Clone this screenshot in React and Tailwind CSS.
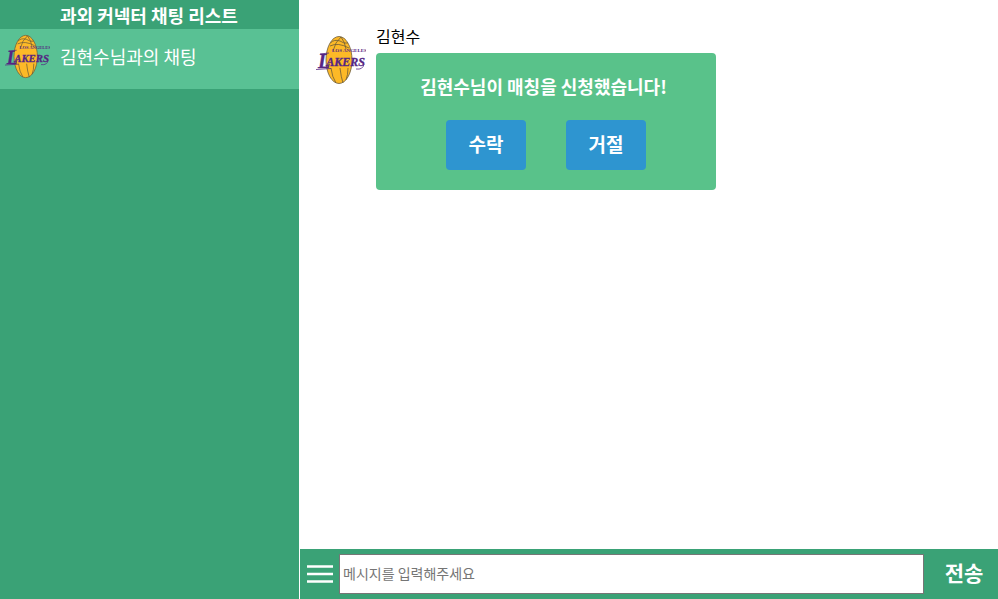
function LakersLogo({ className }) {
  return (
    <svg viewBox="0 0 50 50" className={className} role="img" aria-label="Los Angeles Lakers">
      <ellipse cx="23" cy="25" rx="13" ry="23.500" fill="#fdb927" stroke="#6b5a38" strokeWidth="0.8" />
      <g fill="none" stroke="#6b5a38" strokeWidth="0.8">
        <path d="M14.500 8Q18 4 24 6Q28 9 32 8" />
        <path d="M25 2Q19 7 17 16M25 2Q29 7 30 14M14 11Q22 7 33 13" />
        <path d="M15 33Q16 42 20 48M24 33Q25 42 27 48M32 33Q32 40 30 45" />
      </g>
      <g fill="#552583" fontFamily="Liberation Serif, serif" fontWeight="bold">
        <text x="16" y="17" fontSize="5">LOS ANGELES</text>
        <text x="2" y="33" fontStyle="italic" stroke="#552583" strokeWidth="0.3">
          <tspan fontSize="20">L</tspan>
          <tspan fontSize="12" dx="-4" dy="-2">AKERS</tspan>
        </text>
      </g>
      <path d="M0 34.500L15 33.500M4 19L13 18M48 29Q47 35 40 34" stroke="#552583" strokeWidth="0.8" fill="none" />
    </svg>
  );
}

function ChatList() {
  return (
    <aside className="w-[299px] shrink-0 bg-[#3aa276] text-lg text-white">
      <h1 className="h-[29px] pt-px pl-[60px] font-bold">과외 커넥터 채팅 리스트</h1>
      <a href="#chat" className="flex h-[60px] items-start bg-[#59c194] pt-[5px] pl-[5px]">
        <LakersLogo className="mr-[10px] size-[45px] shrink-0" />
        <span className="pt-2">김현수님과의 채팅</span>
      </a>
    </aside>
  );
}

function MatchRequest() {
  return (
    <article className="flex gap-[10px] pt-6 pl-4">
      <LakersLogo className="mt-[11px] size-[50px] shrink-0" />
      <div>
        <p className="h-[29px] text-base">김현수</p>
        <div className="w-[340px] rounded bg-[#59c28a] p-5 text-white">
          <p className="mb-5 pr-[5px] text-center text-lg leading-[27px] font-bold">김현수님이 매칭을 신청했습니다!</p>
          <div className="flex justify-center gap-10">
            <button type="button" className="h-[50px] w-20 rounded bg-[#2e95d0] pb-[2px] text-[19px] font-bold">수락</button>
            <button type="button" className="h-[50px] w-20 rounded bg-[#2e95d0] pb-[2px] text-[19px] font-bold">거절</button>
          </div>
        </div>
      </div>
    </article>
  );
}

function Composer() {
  return (
    <form className="flex h-[50px] items-center bg-[#3aa276]">
      <button type="button" aria-label="메뉴" className="flex h-full w-[39px] items-center justify-center">
        <svg viewBox="0 0 26 20" className="h-5 w-[26px]" aria-hidden="true">
          <path d="M0 2.500H26M0 10H26M0 17.500H26" stroke="#fff" strokeWidth="2.500" />
        </svg>
      </button>
      <input
        type="text"
        aria-label="메시지"
        placeholder="메시지를 입력해주세요"
        className="h-10 min-w-0 flex-1 border border-[#767676] bg-white px-[3px] pb-[3px] text-sm text-black placeholder:text-[#757575]"
      />
      <button type="submit" className="h-full w-[74px] pb-[2px] pl-[6px] text-[21px] font-bold text-white">전송</button>
    </form>
  );
}

export default function App() {
  return (
    <div className="flex min-h-screen bg-white font-['Noto_Sans_CJK_KR',sans-serif] text-black">
      <ChatList />
      <main className="ml-px flex min-w-0 flex-1 flex-col">
        <section className="flex-1">
          <MatchRequest />
        </section>
        <Composer />
      </main>
    </div>
  );
}
